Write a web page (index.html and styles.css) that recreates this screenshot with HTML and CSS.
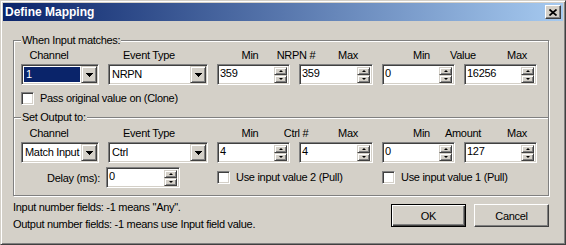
FILE: index.html
```html
<!DOCTYPE html>
<html lang="en">
<head>
    <meta charset="UTF-8">
    <title>Define Mapping</title>
    <link rel="stylesheet" href="styles.css">
</head>
<body>
    <div class="window">
        <div class="titlebar">
            <span class="title">Define Mapping</span>
            <span class="close">
                <svg width="8" height="7" viewBox="0 0 8 7"><path d="M0.5 0.5L7.5 6.5M7.5 0.5L0.5 6.5" stroke="#000" stroke-width="1.7"/></svg>
            </span>
        </div>

        <div class="body">
            <!-- input side -->
            <fieldset class="group group-in">
                <legend>When Input matches:</legend>
                <div class="labels">
                    <span class="lb lb-ch">Channel</span>
                    <span class="lb lb-type">Event Type</span>
                    <span class="lb lb-min">Min</span>
                    <span class="lb lb-num">NRPN #</span>
                    <span class="lb lb-max">Max</span>
                    <span class="lb lb-min2">Min</span>
                    <span class="lb lb-val">Value</span>
                    <span class="lb lb-max2">Max</span>
                </div>
                <div class="fields">
                    <div class="combo">
                        <span class="combo-text selected">1</span>
                        <span class="drop"><svg width="7" height="4" viewBox="0 0 7 4" shape-rendering="crispEdges"><path d="M0 0h7v1h-1v1h-1v1h-1v1h-1v-1h-1v-1h-1v-1h-1z"/></svg></span>
                    </div>
                    <div class="combo">
                        <span class="combo-text">NRPN</span>
                        <span class="drop"><svg width="7" height="4" viewBox="0 0 7 4" shape-rendering="crispEdges"><path d="M0 0h7v1h-1v1h-1v1h-1v1h-1v-1h-1v-1h-1v-1h-1z"/></svg></span>
                    </div>
                    <div class="spin">
                        <span class="spin-text">359</span>
                        <span class="spin-btns"><span class="arrow up"></span><span class="arrow down"></span></span>
                    </div>
                    <div class="spin">
                        <span class="spin-text">359</span>
                        <span class="spin-btns"><span class="arrow up"></span><span class="arrow down"></span></span>
                    </div>
                    <div class="spin">
                        <span class="spin-text">0</span>
                        <span class="spin-btns"><span class="arrow up"></span><span class="arrow down"></span></span>
                    </div>
                    <div class="spin">
                        <span class="spin-text">16256</span>
                        <span class="spin-btns"><span class="arrow up"></span><span class="arrow down"></span></span>
                    </div>
                </div>
                <label class="check check-clone"><span class="box"></span>Pass original value on (Clone)</label>
            </fieldset>

            <!-- output side -->
            <fieldset class="group group-out">
                <legend>Set Output to:</legend>
                <div class="labels">
                    <span class="lb lb-ch">Channel</span>
                    <span class="lb lb-type">Event Type</span>
                    <span class="lb lb-min">Min</span>
                    <span class="lb lb-num">Ctrl #</span>
                    <span class="lb lb-max">Max</span>
                    <span class="lb lb-min2">Min</span>
                    <span class="lb lb-val">Amount</span>
                    <span class="lb lb-max2">Max</span>
                </div>
                <div class="fields">
                    <div class="combo">
                        <span class="combo-text">Match Input</span>
                        <span class="drop"><svg width="7" height="4" viewBox="0 0 7 4" shape-rendering="crispEdges"><path d="M0 0h7v1h-1v1h-1v1h-1v1h-1v-1h-1v-1h-1v-1h-1z"/></svg></span>
                    </div>
                    <div class="combo">
                        <span class="combo-text">Ctrl</span>
                        <span class="drop"><svg width="7" height="4" viewBox="0 0 7 4" shape-rendering="crispEdges"><path d="M0 0h7v1h-1v1h-1v1h-1v1h-1v-1h-1v-1h-1v-1h-1z"/></svg></span>
                    </div>
                    <div class="spin">
                        <span class="spin-text">4</span>
                        <span class="spin-btns"><span class="arrow up"></span><span class="arrow down"></span></span>
                    </div>
                    <div class="spin">
                        <span class="spin-text">4</span>
                        <span class="spin-btns"><span class="arrow up"></span><span class="arrow down"></span></span>
                    </div>
                    <div class="spin">
                        <span class="spin-text">0</span>
                        <span class="spin-btns"><span class="arrow up"></span><span class="arrow down"></span></span>
                    </div>
                    <div class="spin">
                        <span class="spin-text">127</span>
                        <span class="spin-btns"><span class="arrow up"></span><span class="arrow down"></span></span>
                    </div>
                </div>
                <div class="fields fields-extra">
                    <span class="delay-label">Delay (ms):</span>
                    <div class="spin spin-delay">
                        <span class="spin-text">0</span>
                        <span class="spin-btns"><span class="arrow up"></span><span class="arrow down"></span></span>
                    </div>
                    <label class="check check-pull2"><span class="box"></span>Use input value 2 (Pull)</label>
                    <label class="check check-pull1"><span class="box"></span>Use input value 1 (Pull)</label>
                </div>
            </fieldset>

            <div class="footer">
                <div class="notes">
                    <p>Input number fields: -1 means "Any".</p>
                    <p>Output number fields: -1 means use Input field value.</p>
                </div>
                <div class="buttons">
                    <button class="btn btn-default">OK</button>
                    <button class="btn">Cancel</button>
                </div>
            </div>
        </div>
    </div>
</body>
</html>
```

FILE: styles.css
```css
* {
    margin: 0;
    padding: 0;
    box-sizing: border-box;
}

body {
    font-family: "Liberation Sans", Arial, sans-serif;
    font-size: 11px;
    letter-spacing: -0.3px;
    color: #000;
    background: #d4d0c8;
}

.window {
    width: 566px;
    height: 245px;
    display: flex;
    flex-direction: column;
    background: #d4d0c8;
    border: 1px solid;
    border-color: #d4d0c8 #404040 #404040 #d4d0c8;
    box-shadow: inset 1px 1px #fff, inset -1px -1px #808080;
    padding: 2px;
}

.titlebar {
    height: 18px;
    display: flex;
    align-items: center;
    justify-content: space-between;
    padding: 0 2px 0 2px;
    background: linear-gradient(to right, #0a246a, #a6caf0);
}

.title {
    color: #fff;
    font-weight: bold;
    font-size: 12px;
    letter-spacing: 0;
    line-height: 18px;
}

.close {
    width: 16px;
    height: 14px;
    display: flex;
    align-items: center;
    justify-content: center;
    background: #d4d0c8;
    border: 1px solid;
    border-color: #fff #404040 #404040 #fff;
    box-shadow: inset -1px -1px #808080;
}

.body {
    flex: 1;
    display: flex;
    flex-direction: column;
    padding: 0 14px 0 10px;
}

/* etched group boxes */
.group {
    border: 1px solid #808080;
    box-shadow: inset 1px 1px #fff, 1px 1px #fff;
    padding: 2px 7px 7px 7px;
    min-width: 0;
}

.group legend {
    padding: 0 1px;
    line-height: 13px;
    background: #d4d0c8;
}

.group-in {
    margin-top: 13px;
    border-bottom: none;
    padding-bottom: 12px;
}

.group-out {
    margin-top: -6px;
    padding-top: 3px;
}

.labels {
    display: flex;
    height: 13px;
    line-height: 13px;
}

.lb {
    width: 40px;
    display: flex;
    justify-content: center;
    white-space: nowrap;
}

.lb-ch { margin-left: 8px; }
.lb-type { margin-left: 60px; }
.lb-min { margin-left: 61px; }
.lb-num { margin-left: 6px; }
.lb-max { margin-left: 12px; }
.lb-min2 { margin-left: 33.5px; }
.lb-val { margin-left: 1.5px; }
.lb-max2 { margin-left: 14px; }

.fields {
    display: grid;
    grid-template-columns: 78px 100px 73px 74px 73px 73px;
    column-gap: 9px;
    margin-top: 2px;
}

.fields-extra {
    margin-top: 4px;
    align-items: center;
}

/* sunken edit look */
.combo,
.spin {
    height: 21px;
    display: flex;
    background: #fff;
    border: 1px solid;
    border-color: #808080 #fff #fff #808080;
    box-shadow: inset 1px 1px #404040, inset -1px -1px #d4d0c8;
    padding: 1px;
}

.combo-text {
    flex: 1;
    margin: 1px;
    padding-left: 1px;
    line-height: 15px;
    white-space: nowrap;
    overflow: hidden;
}

.combo-text.selected {
    background: #0a246a;
    color: #fff;
    padding-left: 2px;
}

.drop {
    width: 16px;
    flex-shrink: 0;
    display: flex;
    align-items: center;
    justify-content: center;
    background: #d4d0c8;
    border: 1px solid;
    border-color: #d4d0c8 #404040 #404040 #d4d0c8;
    box-shadow: inset 1px 1px #fff, inset -1px -1px #808080;
}

.spin-text {
    flex: 1;
    padding-left: 1px;
    line-height: 15px;
}

.spin-btns {
    width: 13px;
    display: flex;
    flex-direction: column;
    margin: 1px 1px 0 0;
}

.arrow {
    height: 8px;
    display: flex;
    align-items: center;
    justify-content: center;
    background: #d4d0c8;
    border: 1px solid;
    border-color: #d4d0c8 #404040 #404040 #d4d0c8;
    box-shadow: inset 1px 1px #fff, inset -1px -1px #808080;
}

.arrow::after {
    content: "";
    border-left: 2px solid transparent;
    border-right: 2px solid transparent;
}

.arrow.up::after {
    border-bottom: 2px solid #000;
}

.arrow.down::after {
    border-top: 2px solid #000;
}

.delay-label {
    justify-self: end;
    margin-right: -1px;
    white-space: nowrap;
}

.spin-delay {
    width: 74px;
    margin-left: -2px;
}

.check {
    display: flex;
    align-items: center;
    gap: 6px;
    line-height: 13px;
    white-space: nowrap;
}

.check-clone {
    margin-top: 7px;
}

.check-pull2 {
    grid-column: 3 / 5;
}

.check-pull1 {
    grid-column: 5 / 7;
}

.box {
    width: 13px;
    height: 13px;
    flex-shrink: 0;
    background: #fff;
    border: 1px solid;
    border-color: #808080 #fff #fff #808080;
    box-shadow: inset 1px 1px #404040, inset -1px -1px #d4d0c8;
}

.footer {
    display: flex;
    justify-content: space-between;
    margin-top: 3px;
}

.notes p {
    line-height: 17px;
}

.buttons {
    display: flex;
    gap: 8px;
    margin-top: 5px;
}

.btn {
    width: 75px;
    height: 23px;
    font-family: inherit;
    font-size: 11px;
    letter-spacing: -0.3px;
    color: #000;
    background: #d4d0c8;
    border: 1px solid;
    border-color: #fff #404040 #404040 #fff;
    box-shadow: inset -1px -1px #808080;
}

.btn-default {
    border-color: #000;
    box-shadow: inset 1px 1px #fff, inset -1px -1px #404040, inset -2px -2px #808080;
}
```
